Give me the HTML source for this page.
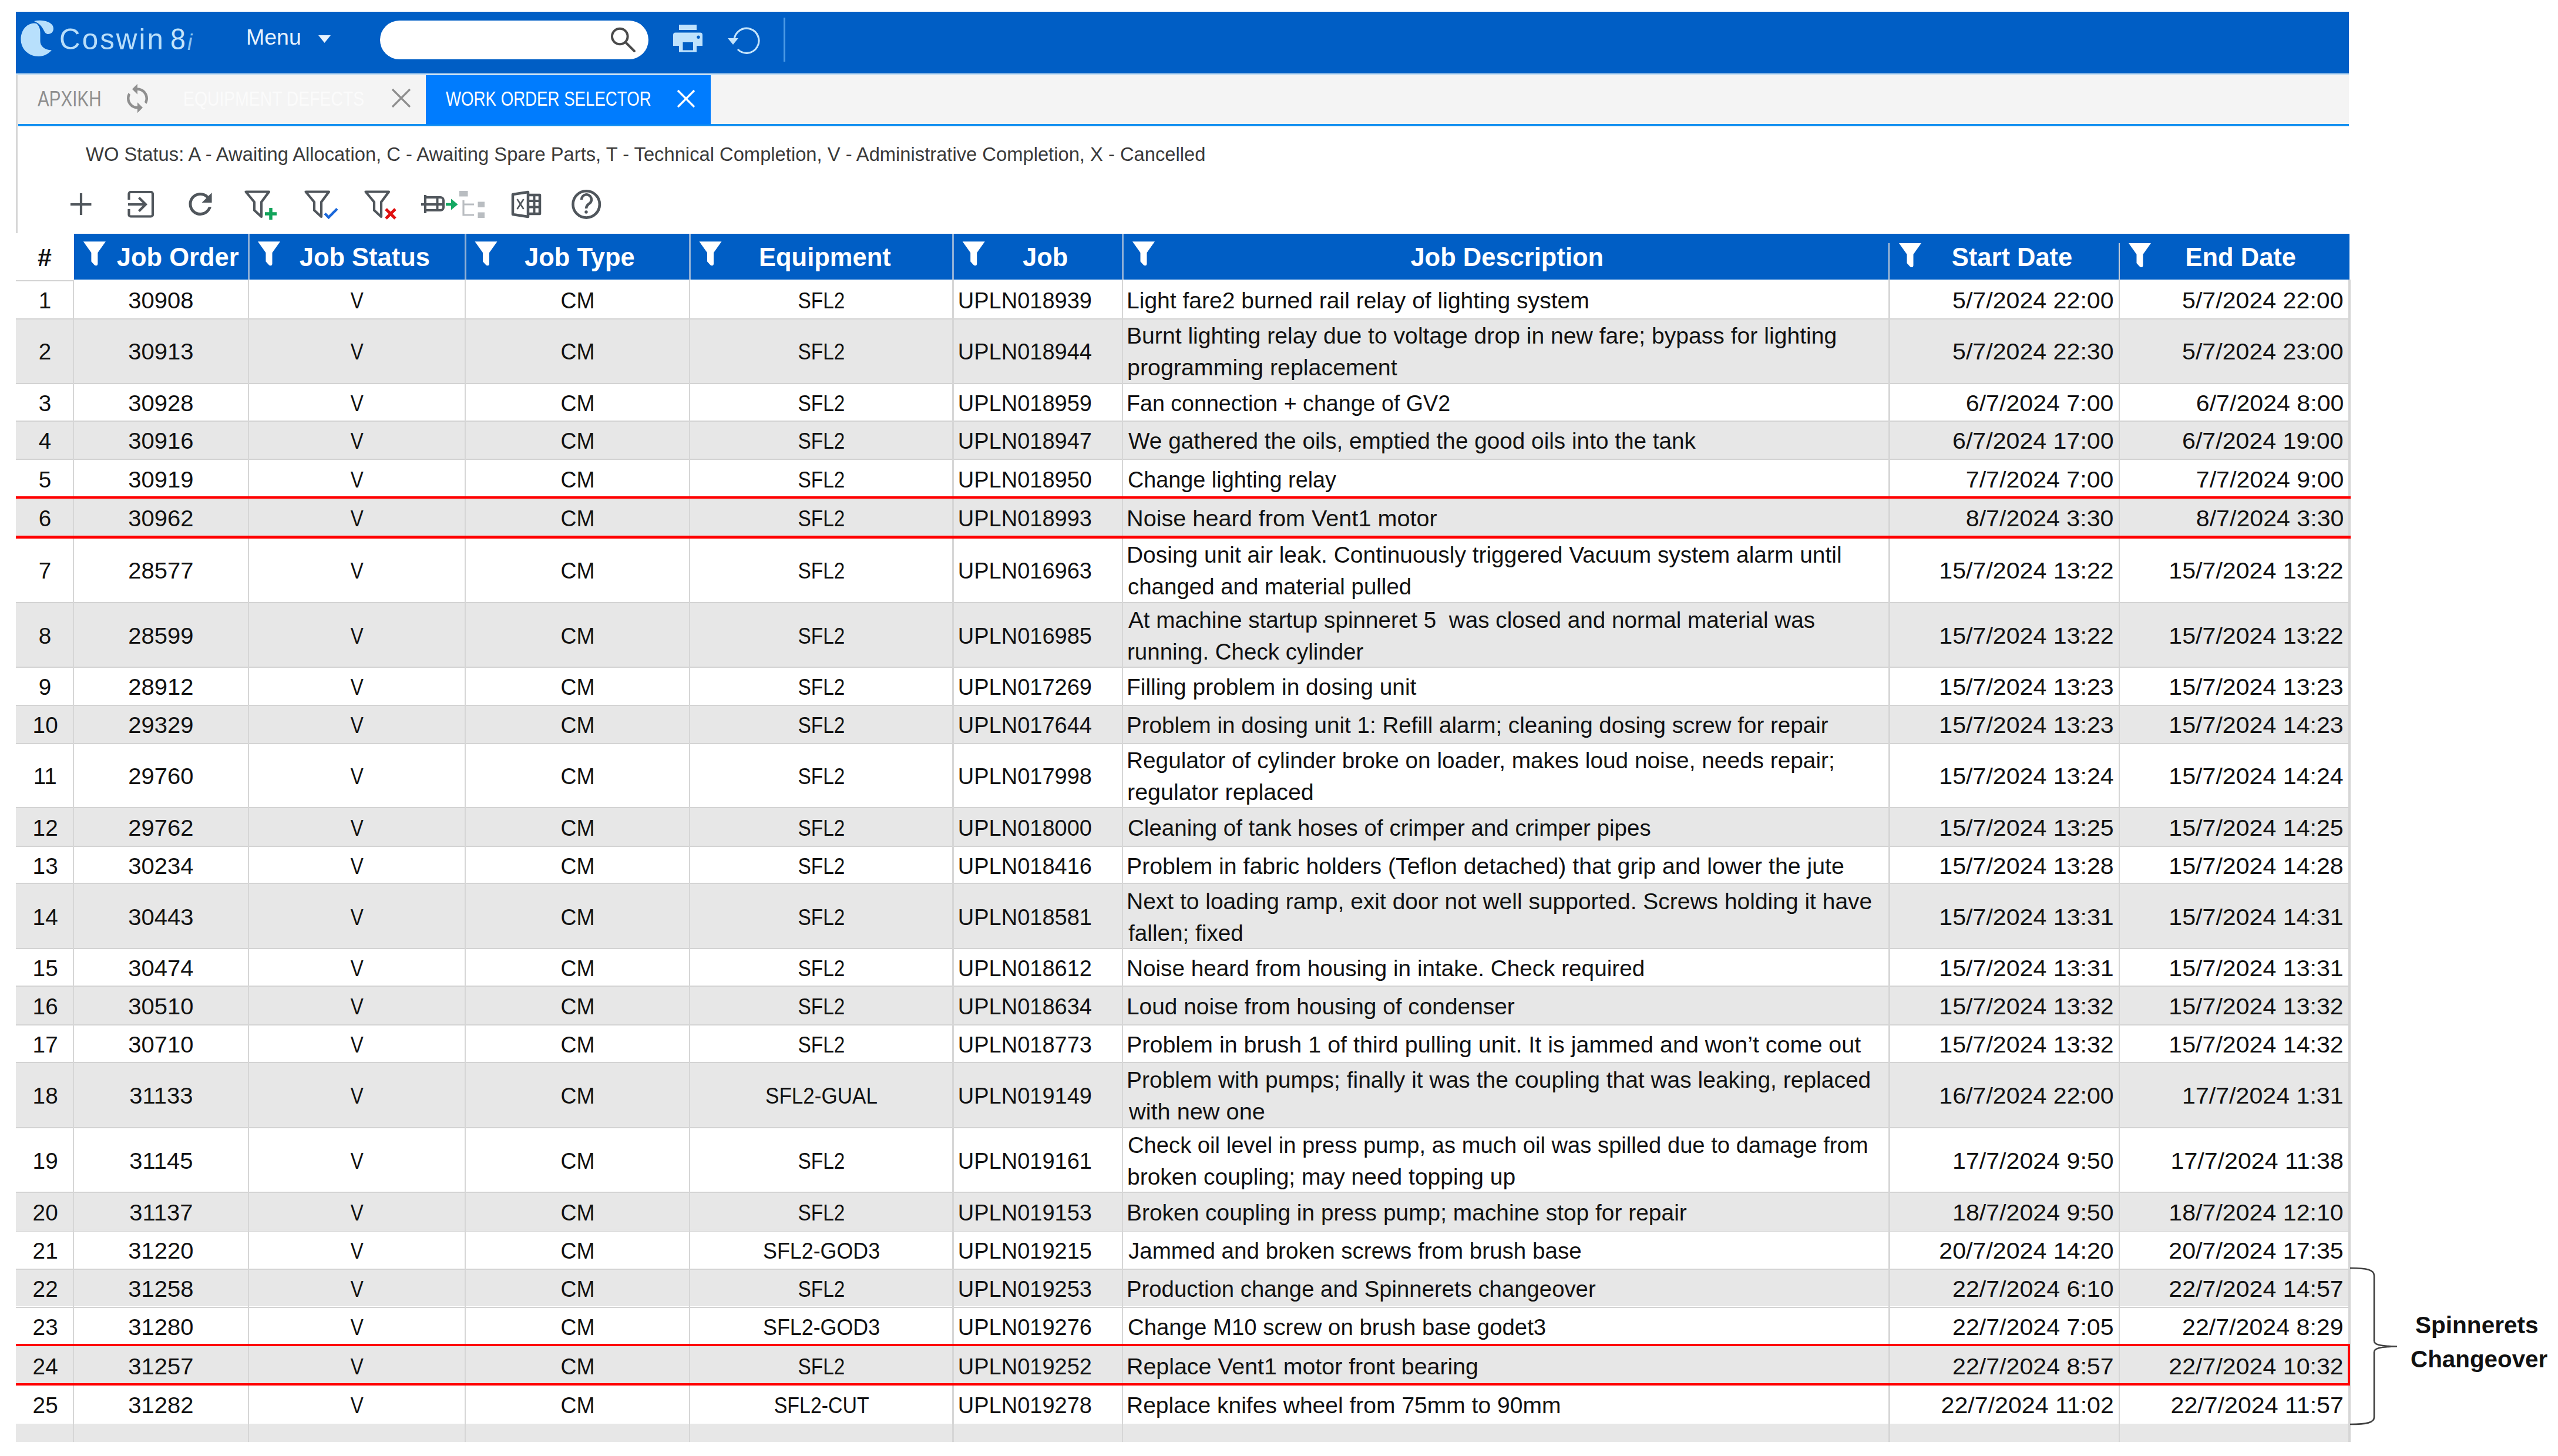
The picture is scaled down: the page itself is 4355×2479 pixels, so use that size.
<!DOCTYPE html>
<html><head><meta charset="utf-8">
<style>
html,body{margin:0;padding:0;}
body{width:4355px;height:2479px;position:relative;overflow:hidden;background:#fff;font-family:"Liberation Sans",sans-serif;}
div{position:absolute;}
.t{white-space:pre;line-height:1;}
.r{left:27px;width:3973px;}
.hl{left:27px;width:3973px;height:2px;background:#d3d3d3;}
.vl{width:2.2px;background:#d6d6d6;}
.hd{top:398px;height:78px;width:3px;background:#8fb0d6;}
svg{position:absolute;left:0;top:0;}
</style></head><body>
<!-- top header bar -->
<div style="left:27px;top:20px;width:3972px;height:104.5px;background:#005ec5;"></div>
<div style="left:27px;top:124.5px;width:3972px;height:3.5px;background:#c9e1f3;"></div>
<!-- tab strip -->
<div style="left:27px;top:128px;width:3972px;height:83px;background:#f4f4f4;"></div>
<div style="left:27px;top:128px;width:3px;height:269px;background:#d6d6d6;"></div>
<div style="left:31px;top:211px;width:3968px;height:4px;background:#1490f0;"></div>
<div style="left:725px;top:128px;width:484.5px;height:84px;background:#007cfe;"></div>
<!-- search -->
<div style="left:647px;top:35px;width:457px;height:66px;border-radius:33px;background:#fff;"></div>
<div style="left:1334px;top:30px;width:3px;height:75px;background:#4d9be6;"></div>

<div class="t" style="left:101px;top:41.5px;font-size:49.4px;color:#b9def9;letter-spacing:3px;">Coswin</div>
<div class="t" style="left:290px;top:41.5px;font-size:49.4px;color:#c4e4fb;transform:scaleX(0.94);transform-origin:left center;">8</div>
<div class="t" style="left:319px;top:53px;font-size:38px;font-style:italic;color:#8cc4f0;">i</div>
<div class="t" style="left:419px;top:44.5px;font-size:37.5px;color:#e8f3fd;">Menu</div>

<div class="t" style="left:64px;top:149.6px;font-size:37px;color:#8e8e8e;transform:scaleX(0.80);transform-origin:left center;">APXIKH</div>
<div class="t" style="left:312px;top:150.1px;font-size:35.3px;color:#fbfbfb;transform:scaleX(0.803);transform-origin:left center;">EQUIPMENT DEFECTS</div>
<div class="t" style="left:759px;top:150.1px;font-size:35.3px;color:#ffffff;transform:scaleX(0.783);transform-origin:left center;">WORK ORDER SELECTOR</div>

<div class="t" style="left:146px;top:247px;font-size:32.72px;color:#3a3a3a;">WO Status: A - Awaiting Allocation, C - Awaiting Spare Parts, T - Technical Completion, V - Administrative Completion, X - Cancelled</div>

<!-- table header -->
<div style="left:126px;top:398px;width:3873.5px;height:78px;background:#005ec5;"></div>
<div class="hd" style="left:421.5px;"></div><div class="hd" style="left:790.5px;"></div><div class="hd" style="left:1172.9px;"></div><div class="hd" style="left:1621.0px;"></div><div class="hd" style="left:1909.5px;"></div><div class="hd" style="left:3215.0px;top:414px;height:62px;background:#c4cdd8;width:2.4px"></div><div class="hd" style="left:3606.5px;top:414px;height:62px;background:#c4cdd8;width:2.4px"></div>

<!-- rows -->
<div class="r" style="top:476.5px;height:65.1px;background:#ffffff"></div>
<div class="r" style="top:541.6px;height:110.0px;background:#e7e7e7"></div>
<div class="r" style="top:651.6px;height:64.4px;background:#ffffff"></div>
<div class="r" style="top:716.0px;height:65.0px;background:#e7e7e7"></div>
<div class="r" style="top:781.0px;height:65.5px;background:#ffffff"></div>
<div class="r" style="top:846.5px;height:68.0px;background:#e7e7e7"></div>
<div class="r" style="top:914.5px;height:110.1px;background:#ffffff"></div>
<div class="r" style="top:1024.6px;height:110.1px;background:#e7e7e7"></div>
<div class="r" style="top:1134.7px;height:65.1px;background:#ffffff"></div>
<div class="r" style="top:1199.8px;height:65.2px;background:#e7e7e7"></div>
<div class="r" style="top:1265.0px;height:108.7px;background:#ffffff"></div>
<div class="r" style="top:1373.7px;height:66.3px;background:#e7e7e7"></div>
<div class="r" style="top:1440.0px;height:63.4px;background:#ffffff"></div>
<div class="r" style="top:1503.4px;height:110.6px;background:#e7e7e7"></div>
<div class="r" style="top:1614.0px;height:64.4px;background:#ffffff"></div>
<div class="r" style="top:1678.4px;height:65.6px;background:#e7e7e7"></div>
<div class="r" style="top:1744.0px;height:63.8px;background:#ffffff"></div>
<div class="r" style="top:1807.8px;height:111.2px;background:#e7e7e7"></div>
<div class="r" style="top:1919.0px;height:109.8px;background:#ffffff"></div>
<div class="r" style="top:2028.8px;height:65.7px;background:#e7e7e7"></div>
<div class="r" style="top:2094.5px;height:65.1px;background:#ffffff"></div>
<div class="r" style="top:2159.6px;height:64.9px;background:#e7e7e7"></div>
<div class="r" style="top:2224.5px;height:65.8px;background:#ffffff"></div>
<div class="r" style="top:2290.3px;height:66.7px;background:#e7e7e7"></div>
<div class="r" style="top:2357.0px;height:66.6px;background:#ffffff"></div>
<div class="t" style="left:77.0px;width:0;display:flex;justify-content:center;top:492.9px;font-size:38px; color:#111;"><span style="white-space:pre;transform:scaleX(1.0186);">1</span></div>
<div class="t" style="left:274.0px;width:0;display:flex;justify-content:center;top:492.9px;font-size:38px; color:#111;"><span style="white-space:pre;transform:scaleX(1.0528);">30908</span></div>
<div class="t" style="left:607.5px;width:0;display:flex;justify-content:center;top:492.9px;font-size:38px; color:#111;"><span style="white-space:pre;transform:scaleX(0.8692);">V</span></div>
<div class="t" style="left:983.2px;width:0;display:flex;justify-content:center;top:492.9px;font-size:38px; color:#111;"><span style="white-space:pre;transform:scaleX(0.9812);">CM</span></div>
<div class="t" style="left:1398.5px;width:0;display:flex;justify-content:center;top:492.9px;font-size:38px; color:#111;"><span style="white-space:pre;transform:scaleX(0.8795);">SFL2</span></div>
<div class="t" style="left:1630.8px;top:492.9px;font-size:38px;color:#111;">UPLN018939</div>
<div class="t" style="left:1917.5px;top:492.9px;font-size:38px;transform:scaleX(1.0274);transform-origin:left center;color:#111;">Light fare2 burned rail relay of lighting system</div>
<div class="t" style="right:756.5px;top:492.9px;font-size:38px;transform:scaleX(1.0826);transform-origin:right center;color:#111;">5/7/2024 22:00</div>
<div class="t" style="right:365.0px;top:492.9px;font-size:38px;transform:scaleX(1.0826);transform-origin:right center;color:#111;">5/7/2024 22:00</div>
<div class="t" style="left:77.0px;width:0;display:flex;justify-content:center;top:580.4px;font-size:38px; color:#111;"><span style="white-space:pre;transform:scaleX(1.0186);">2</span></div>
<div class="t" style="left:274.0px;width:0;display:flex;justify-content:center;top:580.4px;font-size:38px; color:#111;"><span style="white-space:pre;transform:scaleX(1.0528);">30913</span></div>
<div class="t" style="left:607.5px;width:0;display:flex;justify-content:center;top:580.4px;font-size:38px; color:#111;"><span style="white-space:pre;transform:scaleX(0.8692);">V</span></div>
<div class="t" style="left:983.2px;width:0;display:flex;justify-content:center;top:580.4px;font-size:38px; color:#111;"><span style="white-space:pre;transform:scaleX(0.9812);">CM</span></div>
<div class="t" style="left:1398.5px;width:0;display:flex;justify-content:center;top:580.4px;font-size:38px; color:#111;"><span style="white-space:pre;transform:scaleX(0.8795);">SFL2</span></div>
<div class="t" style="left:1630.8px;top:580.4px;font-size:38px;color:#111;">UPLN018944</div>
<div class="t" style="left:1917.5px;top:553.4px;font-size:38px;transform:scaleX(1.0296);transform-origin:left center;color:#111;">Burnt lighting relay due to voltage drop in new fare; bypass for lighting</div>
<div class="t" style="left:1918.5px;top:607.4px;font-size:38px;transform:scaleX(1.0363);transform-origin:left center;color:#111;">programming replacement</div>
<div class="t" style="right:756.5px;top:580.4px;font-size:38px;transform:scaleX(1.0826);transform-origin:right center;color:#111;">5/7/2024 22:30</div>
<div class="t" style="right:365.0px;top:580.4px;font-size:38px;transform:scaleX(1.0826);transform-origin:right center;color:#111;">5/7/2024 23:00</div>
<div class="t" style="left:77.0px;width:0;display:flex;justify-content:center;top:667.6px;font-size:38px; color:#111;"><span style="white-space:pre;transform:scaleX(1.0186);">3</span></div>
<div class="t" style="left:274.0px;width:0;display:flex;justify-content:center;top:667.6px;font-size:38px; color:#111;"><span style="white-space:pre;transform:scaleX(1.0528);">30928</span></div>
<div class="t" style="left:607.5px;width:0;display:flex;justify-content:center;top:667.6px;font-size:38px; color:#111;"><span style="white-space:pre;transform:scaleX(0.8692);">V</span></div>
<div class="t" style="left:983.2px;width:0;display:flex;justify-content:center;top:667.6px;font-size:38px; color:#111;"><span style="white-space:pre;transform:scaleX(0.9812);">CM</span></div>
<div class="t" style="left:1398.5px;width:0;display:flex;justify-content:center;top:667.6px;font-size:38px; color:#111;"><span style="white-space:pre;transform:scaleX(0.8795);">SFL2</span></div>
<div class="t" style="left:1630.8px;top:667.6px;font-size:38px;color:#111;">UPLN018959</div>
<div class="t" style="left:1917.6px;top:667.6px;font-size:38px;transform:scaleX(0.9900);transform-origin:left center;color:#111;">Fan connection + change of GV2</div>
<div class="t" style="right:756.5px;top:667.6px;font-size:38px;transform:scaleX(1.0826);transform-origin:right center;color:#111;">6/7/2024 7:00</div>
<div class="t" style="right:365.0px;top:667.6px;font-size:38px;transform:scaleX(1.0826);transform-origin:right center;color:#111;">6/7/2024 8:00</div>
<div class="t" style="left:77.0px;width:0;display:flex;justify-content:center;top:732.3px;font-size:38px; color:#111;"><span style="white-space:pre;transform:scaleX(1.0186);">4</span></div>
<div class="t" style="left:274.0px;width:0;display:flex;justify-content:center;top:732.3px;font-size:38px; color:#111;"><span style="white-space:pre;transform:scaleX(1.0528);">30916</span></div>
<div class="t" style="left:607.5px;width:0;display:flex;justify-content:center;top:732.3px;font-size:38px; color:#111;"><span style="white-space:pre;transform:scaleX(0.8692);">V</span></div>
<div class="t" style="left:983.2px;width:0;display:flex;justify-content:center;top:732.3px;font-size:38px; color:#111;"><span style="white-space:pre;transform:scaleX(0.9812);">CM</span></div>
<div class="t" style="left:1398.5px;width:0;display:flex;justify-content:center;top:732.3px;font-size:38px; color:#111;"><span style="white-space:pre;transform:scaleX(0.8795);">SFL2</span></div>
<div class="t" style="left:1630.8px;top:732.3px;font-size:38px;color:#111;">UPLN018947</div>
<div class="t" style="left:1920.6px;top:732.3px;font-size:38px;transform:scaleX(1.0192);transform-origin:left center;color:#111;">We gathered the oils, emptied the good oils into the tank</div>
<div class="t" style="right:756.5px;top:732.3px;font-size:38px;transform:scaleX(1.0826);transform-origin:right center;color:#111;">6/7/2024 17:00</div>
<div class="t" style="right:365.0px;top:732.3px;font-size:38px;transform:scaleX(1.0826);transform-origin:right center;color:#111;">6/7/2024 19:00</div>
<div class="t" style="left:77.0px;width:0;display:flex;justify-content:center;top:797.6px;font-size:38px; color:#111;"><span style="white-space:pre;transform:scaleX(1.0186);">5</span></div>
<div class="t" style="left:274.0px;width:0;display:flex;justify-content:center;top:797.6px;font-size:38px; color:#111;"><span style="white-space:pre;transform:scaleX(1.0528);">30919</span></div>
<div class="t" style="left:607.5px;width:0;display:flex;justify-content:center;top:797.6px;font-size:38px; color:#111;"><span style="white-space:pre;transform:scaleX(0.8692);">V</span></div>
<div class="t" style="left:983.2px;width:0;display:flex;justify-content:center;top:797.6px;font-size:38px; color:#111;"><span style="white-space:pre;transform:scaleX(0.9812);">CM</span></div>
<div class="t" style="left:1398.5px;width:0;display:flex;justify-content:center;top:797.6px;font-size:38px; color:#111;"><span style="white-space:pre;transform:scaleX(0.8795);">SFL2</span></div>
<div class="t" style="left:1630.8px;top:797.6px;font-size:38px;color:#111;">UPLN018950</div>
<div class="t" style="left:1919.6px;top:797.6px;font-size:38px;transform:scaleX(0.9944);transform-origin:left center;color:#111;">Change lighting relay</div>
<div class="t" style="right:756.5px;top:797.6px;font-size:38px;transform:scaleX(1.0826);transform-origin:right center;color:#111;">7/7/2024 7:00</div>
<div class="t" style="right:365.0px;top:797.6px;font-size:38px;transform:scaleX(1.0826);transform-origin:right center;color:#111;">7/7/2024 9:00</div>
<div class="t" style="left:77.0px;width:0;display:flex;justify-content:center;top:864.3px;font-size:38px; color:#111;"><span style="white-space:pre;transform:scaleX(1.0186);">6</span></div>
<div class="t" style="left:274.0px;width:0;display:flex;justify-content:center;top:864.3px;font-size:38px; color:#111;"><span style="white-space:pre;transform:scaleX(1.0528);">30962</span></div>
<div class="t" style="left:607.5px;width:0;display:flex;justify-content:center;top:864.3px;font-size:38px; color:#111;"><span style="white-space:pre;transform:scaleX(0.8692);">V</span></div>
<div class="t" style="left:983.2px;width:0;display:flex;justify-content:center;top:864.3px;font-size:38px; color:#111;"><span style="white-space:pre;transform:scaleX(0.9812);">CM</span></div>
<div class="t" style="left:1398.5px;width:0;display:flex;justify-content:center;top:864.3px;font-size:38px; color:#111;"><span style="white-space:pre;transform:scaleX(0.8795);">SFL2</span></div>
<div class="t" style="left:1630.8px;top:864.3px;font-size:38px;color:#111;">UPLN018993</div>
<div class="t" style="left:1917.5px;top:864.3px;font-size:38px;transform:scaleX(1.0431);transform-origin:left center;color:#111;">Noise heard from Vent1 motor</div>
<div class="t" style="right:756.5px;top:864.3px;font-size:38px;transform:scaleX(1.0826);transform-origin:right center;color:#111;">8/7/2024 3:30</div>
<div class="t" style="right:365.0px;top:864.3px;font-size:38px;transform:scaleX(1.0826);transform-origin:right center;color:#111;">8/7/2024 3:30</div>
<div class="t" style="left:77.0px;width:0;display:flex;justify-content:center;top:953.4px;font-size:38px; color:#111;"><span style="white-space:pre;transform:scaleX(1.0186);">7</span></div>
<div class="t" style="left:274.0px;width:0;display:flex;justify-content:center;top:953.4px;font-size:38px; color:#111;"><span style="white-space:pre;transform:scaleX(1.0528);">28577</span></div>
<div class="t" style="left:607.5px;width:0;display:flex;justify-content:center;top:953.4px;font-size:38px; color:#111;"><span style="white-space:pre;transform:scaleX(0.8692);">V</span></div>
<div class="t" style="left:983.2px;width:0;display:flex;justify-content:center;top:953.4px;font-size:38px; color:#111;"><span style="white-space:pre;transform:scaleX(0.9812);">CM</span></div>
<div class="t" style="left:1398.5px;width:0;display:flex;justify-content:center;top:953.4px;font-size:38px; color:#111;"><span style="white-space:pre;transform:scaleX(0.8795);">SFL2</span></div>
<div class="t" style="left:1630.8px;top:953.4px;font-size:38px;color:#111;">UPLN016963</div>
<div class="t" style="left:1917.5px;top:926.4px;font-size:38px;transform:scaleX(1.0246);transform-origin:left center;color:#111;">Dosing unit air leak. Continuously triggered Vacuum system alarm until</div>
<div class="t" style="left:1919.6px;top:980.4px;font-size:38px;transform:scaleX(1.0120);transform-origin:left center;color:#111;">changed and material pulled</div>
<div class="t" style="right:756.5px;top:953.4px;font-size:38px;transform:scaleX(1.0826);transform-origin:right center;color:#111;">15/7/2024 13:22</div>
<div class="t" style="right:365.0px;top:953.4px;font-size:38px;transform:scaleX(1.0826);transform-origin:right center;color:#111;">15/7/2024 13:22</div>
<div class="t" style="left:77.0px;width:0;display:flex;justify-content:center;top:1063.5px;font-size:38px; color:#111;"><span style="white-space:pre;transform:scaleX(1.0186);">8</span></div>
<div class="t" style="left:274.0px;width:0;display:flex;justify-content:center;top:1063.5px;font-size:38px; color:#111;"><span style="white-space:pre;transform:scaleX(1.0528);">28599</span></div>
<div class="t" style="left:607.5px;width:0;display:flex;justify-content:center;top:1063.5px;font-size:38px; color:#111;"><span style="white-space:pre;transform:scaleX(0.8692);">V</span></div>
<div class="t" style="left:983.2px;width:0;display:flex;justify-content:center;top:1063.5px;font-size:38px; color:#111;"><span style="white-space:pre;transform:scaleX(0.9812);">CM</span></div>
<div class="t" style="left:1398.5px;width:0;display:flex;justify-content:center;top:1063.5px;font-size:38px; color:#111;"><span style="white-space:pre;transform:scaleX(0.8795);">SFL2</span></div>
<div class="t" style="left:1630.8px;top:1063.5px;font-size:38px;color:#111;">UPLN016985</div>
<div class="t" style="left:1920.6px;top:1036.5px;font-size:38px;transform:scaleX(1.0174);transform-origin:left center;color:#111;">At machine startup spinneret 5  was closed and normal material was</div>
<div class="t" style="left:1918.6px;top:1090.5px;font-size:38px;transform:scaleX(1.0131);transform-origin:left center;color:#111;">running. Check cylinder</div>
<div class="t" style="right:756.5px;top:1063.5px;font-size:38px;transform:scaleX(1.0826);transform-origin:right center;color:#111;">15/7/2024 13:22</div>
<div class="t" style="right:365.0px;top:1063.5px;font-size:38px;transform:scaleX(1.0826);transform-origin:right center;color:#111;">15/7/2024 13:22</div>
<div class="t" style="left:77.0px;width:0;display:flex;justify-content:center;top:1151.1px;font-size:38px; color:#111;"><span style="white-space:pre;transform:scaleX(1.0186);">9</span></div>
<div class="t" style="left:274.0px;width:0;display:flex;justify-content:center;top:1151.1px;font-size:38px; color:#111;"><span style="white-space:pre;transform:scaleX(1.0528);">28912</span></div>
<div class="t" style="left:607.5px;width:0;display:flex;justify-content:center;top:1151.1px;font-size:38px; color:#111;"><span style="white-space:pre;transform:scaleX(0.8692);">V</span></div>
<div class="t" style="left:983.2px;width:0;display:flex;justify-content:center;top:1151.1px;font-size:38px; color:#111;"><span style="white-space:pre;transform:scaleX(0.9812);">CM</span></div>
<div class="t" style="left:1398.5px;width:0;display:flex;justify-content:center;top:1151.1px;font-size:38px; color:#111;"><span style="white-space:pre;transform:scaleX(0.8795);">SFL2</span></div>
<div class="t" style="left:1630.8px;top:1151.1px;font-size:38px;color:#111;">UPLN017269</div>
<div class="t" style="left:1917.5px;top:1151.1px;font-size:38px;transform:scaleX(1.0246);transform-origin:left center;color:#111;">Filling problem in dosing unit</div>
<div class="t" style="right:756.5px;top:1151.1px;font-size:38px;transform:scaleX(1.0826);transform-origin:right center;color:#111;">15/7/2024 13:23</div>
<div class="t" style="right:365.0px;top:1151.1px;font-size:38px;transform:scaleX(1.0826);transform-origin:right center;color:#111;">15/7/2024 13:23</div>
<div class="t" style="left:77.0px;width:0;display:flex;justify-content:center;top:1216.2px;font-size:38px; color:#111;"><span style="white-space:pre;transform:scaleX(1.0186);">10</span></div>
<div class="t" style="left:274.0px;width:0;display:flex;justify-content:center;top:1216.2px;font-size:38px; color:#111;"><span style="white-space:pre;transform:scaleX(1.0528);">29329</span></div>
<div class="t" style="left:607.5px;width:0;display:flex;justify-content:center;top:1216.2px;font-size:38px; color:#111;"><span style="white-space:pre;transform:scaleX(0.8692);">V</span></div>
<div class="t" style="left:983.2px;width:0;display:flex;justify-content:center;top:1216.2px;font-size:38px; color:#111;"><span style="white-space:pre;transform:scaleX(0.9812);">CM</span></div>
<div class="t" style="left:1398.5px;width:0;display:flex;justify-content:center;top:1216.2px;font-size:38px; color:#111;"><span style="white-space:pre;transform:scaleX(0.8795);">SFL2</span></div>
<div class="t" style="left:1630.8px;top:1216.2px;font-size:38px;color:#111;">UPLN017644</div>
<div class="t" style="left:1917.6px;top:1216.2px;font-size:38px;transform:scaleX(1.0155);transform-origin:left center;color:#111;">Problem in dosing unit 1: Refill alarm; cleaning dosing screw for repair</div>
<div class="t" style="right:756.5px;top:1216.2px;font-size:38px;transform:scaleX(1.0826);transform-origin:right center;color:#111;">15/7/2024 13:23</div>
<div class="t" style="right:365.0px;top:1216.2px;font-size:38px;transform:scaleX(1.0826);transform-origin:right center;color:#111;">15/7/2024 14:23</div>
<div class="t" style="left:77.0px;width:0;display:flex;justify-content:center;top:1303.2px;font-size:38px; color:#111;"><span style="white-space:pre;transform:scaleX(1.0186);">11</span></div>
<div class="t" style="left:274.0px;width:0;display:flex;justify-content:center;top:1303.2px;font-size:38px; color:#111;"><span style="white-space:pre;transform:scaleX(1.0528);">29760</span></div>
<div class="t" style="left:607.5px;width:0;display:flex;justify-content:center;top:1303.2px;font-size:38px; color:#111;"><span style="white-space:pre;transform:scaleX(0.8692);">V</span></div>
<div class="t" style="left:983.2px;width:0;display:flex;justify-content:center;top:1303.2px;font-size:38px; color:#111;"><span style="white-space:pre;transform:scaleX(0.9812);">CM</span></div>
<div class="t" style="left:1398.5px;width:0;display:flex;justify-content:center;top:1303.2px;font-size:38px; color:#111;"><span style="white-space:pre;transform:scaleX(0.8795);">SFL2</span></div>
<div class="t" style="left:1630.8px;top:1303.2px;font-size:38px;color:#111;">UPLN017998</div>
<div class="t" style="left:1917.5px;top:1276.2px;font-size:38px;transform:scaleX(1.0211);transform-origin:left center;color:#111;">Regulator of cylinder broke on loader, makes loud noise, needs repair;</div>
<div class="t" style="left:1918.5px;top:1330.2px;font-size:38px;transform:scaleX(1.0375);transform-origin:left center;color:#111;">regulator replaced</div>
<div class="t" style="right:756.5px;top:1303.2px;font-size:38px;transform:scaleX(1.0826);transform-origin:right center;color:#111;">15/7/2024 13:24</div>
<div class="t" style="right:365.0px;top:1303.2px;font-size:38px;transform:scaleX(1.0826);transform-origin:right center;color:#111;">15/7/2024 14:24</div>
<div class="t" style="left:77.0px;width:0;display:flex;justify-content:center;top:1390.7px;font-size:38px; color:#111;"><span style="white-space:pre;transform:scaleX(1.0186);">12</span></div>
<div class="t" style="left:274.0px;width:0;display:flex;justify-content:center;top:1390.7px;font-size:38px; color:#111;"><span style="white-space:pre;transform:scaleX(1.0528);">29762</span></div>
<div class="t" style="left:607.5px;width:0;display:flex;justify-content:center;top:1390.7px;font-size:38px; color:#111;"><span style="white-space:pre;transform:scaleX(0.8692);">V</span></div>
<div class="t" style="left:983.2px;width:0;display:flex;justify-content:center;top:1390.7px;font-size:38px; color:#111;"><span style="white-space:pre;transform:scaleX(0.9812);">CM</span></div>
<div class="t" style="left:1398.5px;width:0;display:flex;justify-content:center;top:1390.7px;font-size:38px; color:#111;"><span style="white-space:pre;transform:scaleX(0.8795);">SFL2</span></div>
<div class="t" style="left:1630.8px;top:1390.7px;font-size:38px;color:#111;">UPLN018000</div>
<div class="t" style="left:1919.6px;top:1390.7px;font-size:38px;transform:scaleX(1.0137);transform-origin:left center;color:#111;">Cleaning of tank hoses of crimper and crimper pipes</div>
<div class="t" style="right:756.5px;top:1390.7px;font-size:38px;transform:scaleX(1.0826);transform-origin:right center;color:#111;">15/7/2024 13:25</div>
<div class="t" style="right:365.0px;top:1390.7px;font-size:38px;transform:scaleX(1.0826);transform-origin:right center;color:#111;">15/7/2024 14:25</div>
<div class="t" style="left:77.0px;width:0;display:flex;justify-content:center;top:1455.5px;font-size:38px; color:#111;"><span style="white-space:pre;transform:scaleX(1.0186);">13</span></div>
<div class="t" style="left:274.0px;width:0;display:flex;justify-content:center;top:1455.5px;font-size:38px; color:#111;"><span style="white-space:pre;transform:scaleX(1.0528);">30234</span></div>
<div class="t" style="left:607.5px;width:0;display:flex;justify-content:center;top:1455.5px;font-size:38px; color:#111;"><span style="white-space:pre;transform:scaleX(0.8692);">V</span></div>
<div class="t" style="left:983.2px;width:0;display:flex;justify-content:center;top:1455.5px;font-size:38px; color:#111;"><span style="white-space:pre;transform:scaleX(0.9812);">CM</span></div>
<div class="t" style="left:1398.5px;width:0;display:flex;justify-content:center;top:1455.5px;font-size:38px; color:#111;"><span style="white-space:pre;transform:scaleX(0.8795);">SFL2</span></div>
<div class="t" style="left:1630.8px;top:1455.5px;font-size:38px;color:#111;">UPLN018416</div>
<div class="t" style="left:1917.5px;top:1455.5px;font-size:38px;transform:scaleX(1.0329);transform-origin:left center;color:#111;">Problem in fabric holders (Teflon detached) that grip and lower the jute</div>
<div class="t" style="right:756.5px;top:1455.5px;font-size:38px;transform:scaleX(1.0826);transform-origin:right center;color:#111;">15/7/2024 13:28</div>
<div class="t" style="right:365.0px;top:1455.5px;font-size:38px;transform:scaleX(1.0826);transform-origin:right center;color:#111;">15/7/2024 14:28</div>
<div class="t" style="left:77.0px;width:0;display:flex;justify-content:center;top:1542.5px;font-size:38px; color:#111;"><span style="white-space:pre;transform:scaleX(1.0186);">14</span></div>
<div class="t" style="left:274.0px;width:0;display:flex;justify-content:center;top:1542.5px;font-size:38px; color:#111;"><span style="white-space:pre;transform:scaleX(1.0528);">30443</span></div>
<div class="t" style="left:607.5px;width:0;display:flex;justify-content:center;top:1542.5px;font-size:38px; color:#111;"><span style="white-space:pre;transform:scaleX(0.8692);">V</span></div>
<div class="t" style="left:983.2px;width:0;display:flex;justify-content:center;top:1542.5px;font-size:38px; color:#111;"><span style="white-space:pre;transform:scaleX(0.9812);">CM</span></div>
<div class="t" style="left:1398.5px;width:0;display:flex;justify-content:center;top:1542.5px;font-size:38px; color:#111;"><span style="white-space:pre;transform:scaleX(0.8795);">SFL2</span></div>
<div class="t" style="left:1630.8px;top:1542.5px;font-size:38px;color:#111;">UPLN018581</div>
<div class="t" style="left:1917.5px;top:1515.5px;font-size:38px;transform:scaleX(1.0254);transform-origin:left center;color:#111;">Next to loading ramp, exit door not well supported. Screws holding it have</div>
<div class="t" style="left:1920.6px;top:1569.5px;font-size:38px;transform:scaleX(1.0190);transform-origin:left center;color:#111;">fallen; fixed</div>
<div class="t" style="right:756.5px;top:1542.5px;font-size:38px;transform:scaleX(1.0826);transform-origin:right center;color:#111;">15/7/2024 13:31</div>
<div class="t" style="right:365.0px;top:1542.5px;font-size:38px;transform:scaleX(1.0826);transform-origin:right center;color:#111;">15/7/2024 14:31</div>
<div class="t" style="left:77.0px;width:0;display:flex;justify-content:center;top:1630.0px;font-size:38px; color:#111;"><span style="white-space:pre;transform:scaleX(1.0186);">15</span></div>
<div class="t" style="left:274.0px;width:0;display:flex;justify-content:center;top:1630.0px;font-size:38px; color:#111;"><span style="white-space:pre;transform:scaleX(1.0528);">30474</span></div>
<div class="t" style="left:607.5px;width:0;display:flex;justify-content:center;top:1630.0px;font-size:38px; color:#111;"><span style="white-space:pre;transform:scaleX(0.8692);">V</span></div>
<div class="t" style="left:983.2px;width:0;display:flex;justify-content:center;top:1630.0px;font-size:38px; color:#111;"><span style="white-space:pre;transform:scaleX(0.9812);">CM</span></div>
<div class="t" style="left:1398.5px;width:0;display:flex;justify-content:center;top:1630.0px;font-size:38px; color:#111;"><span style="white-space:pre;transform:scaleX(0.8795);">SFL2</span></div>
<div class="t" style="left:1630.8px;top:1630.0px;font-size:38px;color:#111;">UPLN018612</div>
<div class="t" style="left:1917.5px;top:1630.0px;font-size:38px;transform:scaleX(1.0187);transform-origin:left center;color:#111;">Noise heard from housing in intake. Check required</div>
<div class="t" style="right:756.5px;top:1630.0px;font-size:38px;transform:scaleX(1.0826);transform-origin:right center;color:#111;">15/7/2024 13:31</div>
<div class="t" style="right:365.0px;top:1630.0px;font-size:38px;transform:scaleX(1.0826);transform-origin:right center;color:#111;">15/7/2024 13:31</div>
<div class="t" style="left:77.0px;width:0;display:flex;justify-content:center;top:1695.0px;font-size:38px; color:#111;"><span style="white-space:pre;transform:scaleX(1.0186);">16</span></div>
<div class="t" style="left:274.0px;width:0;display:flex;justify-content:center;top:1695.0px;font-size:38px; color:#111;"><span style="white-space:pre;transform:scaleX(1.0528);">30510</span></div>
<div class="t" style="left:607.5px;width:0;display:flex;justify-content:center;top:1695.0px;font-size:38px; color:#111;"><span style="white-space:pre;transform:scaleX(0.8692);">V</span></div>
<div class="t" style="left:983.2px;width:0;display:flex;justify-content:center;top:1695.0px;font-size:38px; color:#111;"><span style="white-space:pre;transform:scaleX(0.9812);">CM</span></div>
<div class="t" style="left:1398.5px;width:0;display:flex;justify-content:center;top:1695.0px;font-size:38px; color:#111;"><span style="white-space:pre;transform:scaleX(0.8795);">SFL2</span></div>
<div class="t" style="left:1630.8px;top:1695.0px;font-size:38px;color:#111;">UPLN018634</div>
<div class="t" style="left:1917.5px;top:1695.0px;font-size:38px;transform:scaleX(1.0221);transform-origin:left center;color:#111;">Loud noise from housing of condenser</div>
<div class="t" style="right:756.5px;top:1695.0px;font-size:38px;transform:scaleX(1.0826);transform-origin:right center;color:#111;">15/7/2024 13:32</div>
<div class="t" style="right:365.0px;top:1695.0px;font-size:38px;transform:scaleX(1.0826);transform-origin:right center;color:#111;">15/7/2024 13:32</div>
<div class="t" style="left:77.0px;width:0;display:flex;justify-content:center;top:1759.7px;font-size:38px; color:#111;"><span style="white-space:pre;transform:scaleX(1.0186);">17</span></div>
<div class="t" style="left:274.0px;width:0;display:flex;justify-content:center;top:1759.7px;font-size:38px; color:#111;"><span style="white-space:pre;transform:scaleX(1.0528);">30710</span></div>
<div class="t" style="left:607.5px;width:0;display:flex;justify-content:center;top:1759.7px;font-size:38px; color:#111;"><span style="white-space:pre;transform:scaleX(0.8692);">V</span></div>
<div class="t" style="left:983.2px;width:0;display:flex;justify-content:center;top:1759.7px;font-size:38px; color:#111;"><span style="white-space:pre;transform:scaleX(0.9812);">CM</span></div>
<div class="t" style="left:1398.5px;width:0;display:flex;justify-content:center;top:1759.7px;font-size:38px; color:#111;"><span style="white-space:pre;transform:scaleX(0.8795);">SFL2</span></div>
<div class="t" style="left:1630.8px;top:1759.7px;font-size:38px;color:#111;">UPLN018773</div>
<div class="t" style="left:1917.5px;top:1759.7px;font-size:38px;transform:scaleX(1.0384);transform-origin:left center;color:#111;">Problem in brush 1 of third pulling unit. It is jammed and won’t come out</div>
<div class="t" style="right:756.5px;top:1759.7px;font-size:38px;transform:scaleX(1.0826);transform-origin:right center;color:#111;">15/7/2024 13:32</div>
<div class="t" style="right:365.0px;top:1759.7px;font-size:38px;transform:scaleX(1.0826);transform-origin:right center;color:#111;">15/7/2024 14:32</div>
<div class="t" style="left:77.0px;width:0;display:flex;justify-content:center;top:1847.2px;font-size:38px; color:#111;"><span style="white-space:pre;transform:scaleX(1.0186);">18</span></div>
<div class="t" style="left:274.0px;width:0;display:flex;justify-content:center;top:1847.2px;font-size:38px; color:#111;"><span style="white-space:pre;transform:scaleX(1.0528);">31133</span></div>
<div class="t" style="left:607.5px;width:0;display:flex;justify-content:center;top:1847.2px;font-size:38px; color:#111;"><span style="white-space:pre;transform:scaleX(0.8692);">V</span></div>
<div class="t" style="left:983.2px;width:0;display:flex;justify-content:center;top:1847.2px;font-size:38px; color:#111;"><span style="white-space:pre;transform:scaleX(0.9812);">CM</span></div>
<div class="t" style="left:1398.5px;width:0;display:flex;justify-content:center;top:1847.2px;font-size:38px; color:#111;"><span style="white-space:pre;transform:scaleX(0.9227);">SFL2-GUAL</span></div>
<div class="t" style="left:1630.8px;top:1847.2px;font-size:38px;color:#111;">UPLN019149</div>
<div class="t" style="left:1917.5px;top:1820.2px;font-size:38px;transform:scaleX(1.0256);transform-origin:left center;color:#111;">Problem with pumps; finally it was the coupling that was leaking, replaced</div>
<div class="t" style="left:1921.6px;top:1874.2px;font-size:38px;transform:scaleX(1.0453);transform-origin:left center;color:#111;">with new one</div>
<div class="t" style="right:756.5px;top:1847.2px;font-size:38px;transform:scaleX(1.0826);transform-origin:right center;color:#111;">16/7/2024 22:00</div>
<div class="t" style="right:365.0px;top:1847.2px;font-size:38px;transform:scaleX(1.0826);transform-origin:right center;color:#111;">17/7/2024 1:31</div>
<div class="t" style="left:77.0px;width:0;display:flex;justify-content:center;top:1957.7px;font-size:38px; color:#111;"><span style="white-space:pre;transform:scaleX(1.0186);">19</span></div>
<div class="t" style="left:274.0px;width:0;display:flex;justify-content:center;top:1957.7px;font-size:38px; color:#111;"><span style="white-space:pre;transform:scaleX(1.0528);">31145</span></div>
<div class="t" style="left:607.5px;width:0;display:flex;justify-content:center;top:1957.7px;font-size:38px; color:#111;"><span style="white-space:pre;transform:scaleX(0.8692);">V</span></div>
<div class="t" style="left:983.2px;width:0;display:flex;justify-content:center;top:1957.7px;font-size:38px; color:#111;"><span style="white-space:pre;transform:scaleX(0.9812);">CM</span></div>
<div class="t" style="left:1398.5px;width:0;display:flex;justify-content:center;top:1957.7px;font-size:38px; color:#111;"><span style="white-space:pre;transform:scaleX(0.8795);">SFL2</span></div>
<div class="t" style="left:1630.8px;top:1957.7px;font-size:38px;color:#111;">UPLN019161</div>
<div class="t" style="left:1919.6px;top:1930.7px;font-size:38px;transform:scaleX(1.0048);transform-origin:left center;color:#111;">Check oil level in press pump, as much oil was spilled due to damage from</div>
<div class="t" style="left:1918.5px;top:1984.7px;font-size:38px;transform:scaleX(1.0262);transform-origin:left center;color:#111;">broken coupling; may need topping up</div>
<div class="t" style="right:756.5px;top:1957.7px;font-size:38px;transform:scaleX(1.0826);transform-origin:right center;color:#111;">17/7/2024 9:50</div>
<div class="t" style="right:365.0px;top:1957.7px;font-size:38px;transform:scaleX(1.0826);transform-origin:right center;color:#111;">17/7/2024 11:38</div>
<div class="t" style="left:77.0px;width:0;display:flex;justify-content:center;top:2045.5px;font-size:38px; color:#111;"><span style="white-space:pre;transform:scaleX(1.0186);">20</span></div>
<div class="t" style="left:274.0px;width:0;display:flex;justify-content:center;top:2045.5px;font-size:38px; color:#111;"><span style="white-space:pre;transform:scaleX(1.0528);">31137</span></div>
<div class="t" style="left:607.5px;width:0;display:flex;justify-content:center;top:2045.5px;font-size:38px; color:#111;"><span style="white-space:pre;transform:scaleX(0.8692);">V</span></div>
<div class="t" style="left:983.2px;width:0;display:flex;justify-content:center;top:2045.5px;font-size:38px; color:#111;"><span style="white-space:pre;transform:scaleX(0.9812);">CM</span></div>
<div class="t" style="left:1398.5px;width:0;display:flex;justify-content:center;top:2045.5px;font-size:38px; color:#111;"><span style="white-space:pre;transform:scaleX(0.8795);">SFL2</span></div>
<div class="t" style="left:1630.8px;top:2045.5px;font-size:38px;color:#111;">UPLN019153</div>
<div class="t" style="left:1917.5px;top:2045.5px;font-size:38px;transform:scaleX(1.0239);transform-origin:left center;color:#111;">Broken coupling in press pump; machine stop for repair</div>
<div class="t" style="right:756.5px;top:2045.5px;font-size:38px;transform:scaleX(1.0826);transform-origin:right center;color:#111;">18/7/2024 9:50</div>
<div class="t" style="right:365.0px;top:2045.5px;font-size:38px;transform:scaleX(1.0826);transform-origin:right center;color:#111;">18/7/2024 12:10</div>
<div class="t" style="left:77.0px;width:0;display:flex;justify-content:center;top:2110.9px;font-size:38px; color:#111;"><span style="white-space:pre;transform:scaleX(1.0186);">21</span></div>
<div class="t" style="left:274.0px;width:0;display:flex;justify-content:center;top:2110.9px;font-size:38px; color:#111;"><span style="white-space:pre;transform:scaleX(1.0528);">31220</span></div>
<div class="t" style="left:607.5px;width:0;display:flex;justify-content:center;top:2110.9px;font-size:38px; color:#111;"><span style="white-space:pre;transform:scaleX(0.8692);">V</span></div>
<div class="t" style="left:983.2px;width:0;display:flex;justify-content:center;top:2110.9px;font-size:38px; color:#111;"><span style="white-space:pre;transform:scaleX(0.9812);">CM</span></div>
<div class="t" style="left:1398.5px;width:0;display:flex;justify-content:center;top:2110.9px;font-size:38px; color:#111;"><span style="white-space:pre;transform:scaleX(0.9424);">SFL2-GOD3</span></div>
<div class="t" style="left:1630.8px;top:2110.9px;font-size:38px;color:#111;">UPLN019215</div>
<div class="t" style="left:1920.6px;top:2110.9px;font-size:38px;transform:scaleX(1.0149);transform-origin:left center;color:#111;">Jammed and broken screws from brush base</div>
<div class="t" style="right:756.5px;top:2110.9px;font-size:38px;transform:scaleX(1.0826);transform-origin:right center;color:#111;">20/7/2024 14:20</div>
<div class="t" style="right:365.0px;top:2110.9px;font-size:38px;transform:scaleX(1.0826);transform-origin:right center;color:#111;">20/7/2024 17:35</div>
<div class="t" style="left:77.0px;width:0;display:flex;justify-content:center;top:2175.9px;font-size:38px; color:#111;"><span style="white-space:pre;transform:scaleX(1.0186);">22</span></div>
<div class="t" style="left:274.0px;width:0;display:flex;justify-content:center;top:2175.9px;font-size:38px; color:#111;"><span style="white-space:pre;transform:scaleX(1.0528);">31258</span></div>
<div class="t" style="left:607.5px;width:0;display:flex;justify-content:center;top:2175.9px;font-size:38px; color:#111;"><span style="white-space:pre;transform:scaleX(0.8692);">V</span></div>
<div class="t" style="left:983.2px;width:0;display:flex;justify-content:center;top:2175.9px;font-size:38px; color:#111;"><span style="white-space:pre;transform:scaleX(0.9812);">CM</span></div>
<div class="t" style="left:1398.5px;width:0;display:flex;justify-content:center;top:2175.9px;font-size:38px; color:#111;"><span style="white-space:pre;transform:scaleX(0.8795);">SFL2</span></div>
<div class="t" style="left:1630.8px;top:2175.9px;font-size:38px;color:#111;">UPLN019253</div>
<div class="t" style="left:1917.6px;top:2175.9px;font-size:38px;transform:scaleX(1.0081);transform-origin:left center;color:#111;">Production change and Spinnerets changeover</div>
<div class="t" style="right:756.5px;top:2175.9px;font-size:38px;transform:scaleX(1.0826);transform-origin:right center;color:#111;">22/7/2024 6:10</div>
<div class="t" style="right:365.0px;top:2175.9px;font-size:38px;transform:scaleX(1.0826);transform-origin:right center;color:#111;">22/7/2024 14:57</div>
<div class="t" style="left:77.0px;width:0;display:flex;justify-content:center;top:2241.2px;font-size:38px; color:#111;"><span style="white-space:pre;transform:scaleX(1.0186);">23</span></div>
<div class="t" style="left:274.0px;width:0;display:flex;justify-content:center;top:2241.2px;font-size:38px; color:#111;"><span style="white-space:pre;transform:scaleX(1.0528);">31280</span></div>
<div class="t" style="left:607.5px;width:0;display:flex;justify-content:center;top:2241.2px;font-size:38px; color:#111;"><span style="white-space:pre;transform:scaleX(0.8692);">V</span></div>
<div class="t" style="left:983.2px;width:0;display:flex;justify-content:center;top:2241.2px;font-size:38px; color:#111;"><span style="white-space:pre;transform:scaleX(0.9812);">CM</span></div>
<div class="t" style="left:1398.5px;width:0;display:flex;justify-content:center;top:2241.2px;font-size:38px; color:#111;"><span style="white-space:pre;transform:scaleX(0.9424);">SFL2-GOD3</span></div>
<div class="t" style="left:1630.8px;top:2241.2px;font-size:38px;color:#111;">UPLN019276</div>
<div class="t" style="left:1919.6px;top:2241.2px;font-size:38px;transform:scaleX(1.0093);transform-origin:left center;color:#111;">Change M10 screw on brush base godet3</div>
<div class="t" style="right:756.5px;top:2241.2px;font-size:38px;transform:scaleX(1.0826);transform-origin:right center;color:#111;">22/7/2024 7:05</div>
<div class="t" style="right:365.0px;top:2241.2px;font-size:38px;transform:scaleX(1.0826);transform-origin:right center;color:#111;">22/7/2024 8:29</div>
<div class="t" style="left:77.0px;width:0;display:flex;justify-content:center;top:2307.5px;font-size:38px; color:#111;"><span style="white-space:pre;transform:scaleX(1.0186);">24</span></div>
<div class="t" style="left:274.0px;width:0;display:flex;justify-content:center;top:2307.5px;font-size:38px; color:#111;"><span style="white-space:pre;transform:scaleX(1.0528);">31257</span></div>
<div class="t" style="left:607.5px;width:0;display:flex;justify-content:center;top:2307.5px;font-size:38px; color:#111;"><span style="white-space:pre;transform:scaleX(0.8692);">V</span></div>
<div class="t" style="left:983.2px;width:0;display:flex;justify-content:center;top:2307.5px;font-size:38px; color:#111;"><span style="white-space:pre;transform:scaleX(0.9812);">CM</span></div>
<div class="t" style="left:1398.5px;width:0;display:flex;justify-content:center;top:2307.5px;font-size:38px; color:#111;"><span style="white-space:pre;transform:scaleX(0.8795);">SFL2</span></div>
<div class="t" style="left:1630.8px;top:2307.5px;font-size:38px;color:#111;">UPLN019252</div>
<div class="t" style="left:1917.5px;top:2307.5px;font-size:38px;transform:scaleX(1.0349);transform-origin:left center;color:#111;">Replace Vent1 motor front bearing</div>
<div class="t" style="right:756.5px;top:2307.5px;font-size:38px;transform:scaleX(1.0826);transform-origin:right center;color:#111;">22/7/2024 8:57</div>
<div class="t" style="right:365.0px;top:2307.5px;font-size:38px;transform:scaleX(1.0826);transform-origin:right center;color:#111;">22/7/2024 10:32</div>
<div class="t" style="left:77.0px;width:0;display:flex;justify-content:center;top:2374.1px;font-size:38px; color:#111;"><span style="white-space:pre;transform:scaleX(1.0186);">25</span></div>
<div class="t" style="left:274.0px;width:0;display:flex;justify-content:center;top:2374.1px;font-size:38px; color:#111;"><span style="white-space:pre;transform:scaleX(1.0528);">31282</span></div>
<div class="t" style="left:607.5px;width:0;display:flex;justify-content:center;top:2374.1px;font-size:38px; color:#111;"><span style="white-space:pre;transform:scaleX(0.8692);">V</span></div>
<div class="t" style="left:983.2px;width:0;display:flex;justify-content:center;top:2374.1px;font-size:38px; color:#111;"><span style="white-space:pre;transform:scaleX(0.9812);">CM</span></div>
<div class="t" style="left:1398.5px;width:0;display:flex;justify-content:center;top:2374.1px;font-size:38px; color:#111;"><span style="white-space:pre;transform:scaleX(0.8926);">SFL2-CUT</span></div>
<div class="t" style="left:1630.8px;top:2374.1px;font-size:38px;color:#111;">UPLN019278</div>
<div class="t" style="left:1917.5px;top:2374.1px;font-size:38px;transform:scaleX(1.0267);transform-origin:left center;color:#111;">Replace knifes wheel from 75mm to 90mm</div>
<div class="t" style="right:756.5px;top:2374.1px;font-size:38px;transform:scaleX(1.0826);transform-origin:right center;color:#111;">22/7/2024 11:02</div>
<div class="t" style="right:365.0px;top:2374.1px;font-size:38px;transform:scaleX(1.0826);transform-origin:right center;color:#111;">22/7/2024 11:57</div>
<div style="left:27px;top:2423.6px;width:3973px;height:31.4px;background:#e7e7e7;"></div>
<div class="hl" style="top:476.5px;width:98px"></div>
<div class="hl" style="top:541.6px"></div>
<div class="hl" style="top:651.6px"></div>
<div class="hl" style="top:716.0px"></div>
<div class="hl" style="top:781.0px"></div>
<div class="hl" style="top:846.5px"></div>
<div class="hl" style="top:914.5px"></div>
<div class="hl" style="top:1024.6px"></div>
<div class="hl" style="top:1134.7px"></div>
<div class="hl" style="top:1199.8px"></div>
<div class="hl" style="top:1265.0px"></div>
<div class="hl" style="top:1373.7px"></div>
<div class="hl" style="top:1440.0px"></div>
<div class="hl" style="top:1503.4px"></div>
<div class="hl" style="top:1614.0px"></div>
<div class="hl" style="top:1678.4px"></div>
<div class="hl" style="top:1744.0px"></div>
<div class="hl" style="top:1807.8px"></div>
<div class="hl" style="top:1919.0px"></div>
<div class="hl" style="top:2028.8px"></div>
<div class="hl" style="top:2094.5px"></div>
<div class="hl" style="top:2159.6px"></div>
<div class="hl" style="top:2224.5px"></div>
<div class="hl" style="top:2290.3px"></div>
<div class="hl" style="top:2357.0px"></div>
<div class="vl" style="left:123.9px;top:476px;height:1979px;"></div>
<div class="vl" style="left:421.9px;top:476px;height:1979px;"></div>
<div class="vl" style="left:790.9px;top:476px;height:1979px;"></div>
<div class="vl" style="left:1173.3px;top:476px;height:1979px;"></div>
<div class="vl" style="left:1621.4px;top:476px;height:1979px;"></div>
<div class="vl" style="left:1909.9px;top:476px;height:1979px;"></div>
<div class="vl" style="left:3215.4px;top:476px;height:1979px;"></div>
<div class="vl" style="left:3606.9px;top:476px;height:1979px;"></div>
<div class="vl" style="left:3998.4px;top:476px;height:1979px;width:3.3px"></div>
<div class="t" style="left:198.8px;top:416.7px;font-size:43.5px;font-weight:bold;color:#fff;">Job Order</div>
<div class="t" style="left:509.7px;top:416.7px;font-size:43.5px;font-weight:bold;color:#fff;">Job Status</div>
<div class="t" style="left:893.0px;top:416.7px;font-size:43.5px;font-weight:bold;color:#fff;">Job Type</div>
<div class="t" style="left:1292.0px;top:416.7px;font-size:43.5px;font-weight:bold;color:#fff;">Equipment</div>
<div class="t" style="left:1741.0px;top:416.7px;font-size:43.5px;font-weight:bold;color:#fff;">Job</div>
<div class="t" style="left:2401.4px;top:416.7px;font-size:43.5px;font-weight:bold;color:#fff;">Job Description</div>
<div class="t" style="left:3322.8px;top:416.7px;font-size:43.5px;font-weight:bold;color:#fff;">Start Date</div>
<div class="t" style="left:3720.5px;top:416.7px;font-size:43.5px;font-weight:bold;color:#fff;">End Date</div>
<div class="t" style="left:76.0px;width:0;display:flex;justify-content:center;top:416.7px;font-size:43px;font-weight:bold; color:#111;"><span style="white-space:pre;">#</span></div>

<!-- red highlights -->
<div style="left:27px;top:845.2px;width:3975px;height:4.2px;background:#ff0000;"></div>
<div style="left:27px;top:912.4px;width:3975px;height:4.4px;background:#ff0000;"></div>
<div style="left:27px;top:2287.6px;width:3974px;height:4.4px;background:#ff0000;"></div>
<div style="left:27px;top:2354.8px;width:3974px;height:4.4px;background:#ff0000;"></div>
<div style="left:3996.6px;top:2287.6px;width:4.4px;height:71.6px;background:#ff0000;"></div>

<!-- annotation -->
<div class="t" style="left:4112px;top:2236.8px;font-size:39.8px;font-weight:bold;color:#111;transform:scaleX(1.019);transform-origin:left center;">Spinnerets</div>
<div class="t" style="left:4104px;top:2294.2px;font-size:41.2px;font-weight:bold;color:#111;transform:scaleX(0.98);transform-origin:left center;">Changeover</div>

<svg width="4355" height="2479" viewBox="0 0 4355 2479">
 <!-- logo -->
 <g fill="#b8e0fc" transform="translate(28,28)">
  <path d="M34 12 C38 15 40.5 20 40.5 28 L40.5 42 C40.5 50 47 57 60 57.5 C54 64 46 68 38 68 C20 68 7.5 55 7.5 39 C7.5 24 17 12 30 11.5 C31.5 11.5 33 11.7 34 12 Z"/>
  <path d="M30 8 C38 6 47 6.5 54 9.5 C60 12 63 16 63 21 C63 26 59 30 54 30 C50.5 30 48.5 27.5 47 24.5 C44.5 19 41 13.5 33 9.5 C32 9 31 8.5 30 8 Z"/>
 </g>
 <!-- menu caret -->
 <path d="M542 60 L563 60 L552.5 73 Z" fill="#e8f3fd"/>
 <!-- search icon -->
 <g fill="none" stroke="#4a4a4a" stroke-width="4">
  <circle cx="1055.3" cy="62" r="13.3"/>
  <path d="M1065 72 L1080 87" stroke-linecap="round"/>
 </g>
 <!-- print icon -->
 <g fill="#bfe2fc">
  <rect x="1156" y="42" width="30" height="9"/>
  <path d="M1150 55.5 h42 a4 4 0 0 1 4 4 v18.5 h-10 v10.7 h-30 v-10.7 h-10 v-18.5 a4 4 0 0 1 4 -4 z"/>
 </g>
 <rect x="1162.5" y="72" width="17.5" height="13.5" fill="#005ec5"/>
 <circle cx="1189" cy="63.3" r="2.7" fill="#005ec5"/>
 <!-- refresh icon header -->
 <g fill="none" stroke="#c4e4fb" stroke-width="3.2">
  <path d="M1250 68 A21 21 0 1 1 1256 84"/>
 </g>
 <path d="M1239 65 L1257 65 L1248 76 Z" fill="#c4e4fb"/>
 <!-- tabs icons -->
 <path transform="translate(207,140.5) scale(2.25)" fill="#8f8f8f" d="M12 4V1L8 5l4 4V6c3.31 0 6 2.69 6 6 0 1.01-.25 1.970-.7 2.8l1.46 1.46C19.54 15.03 20 13.570 20 12c0-4.42-3.58-8-8-8zm0 14c-3.31 0-6-2.69-6-6 0-1.01.25-1.97.7-2.8L5.24 7.74C4.46 8.97 4 10.43 4 12c0 4.42 3.58 8 8 8v3l4-4-4-4v3z"/>
 <path d="M668 152 L698 182 M698 152 L668 182" fill="none" stroke="#8f8f8f" stroke-width="3.2"/>
 <g fill="none" stroke="#ffffff" stroke-width="3.4">
  <path d="M1154 154 L1182 182 M1182 154 L1154 182"/>
 </g>
 <!-- toolbar icons -->
 <g fill="none" stroke="#50565c" stroke-width="4.2">
  <path d="M120 348 H155.5 M138 329 V366"/>
  <path d="M219.5 340 V330 a3 3 0 0 1 3 -3 H257 a3 3 0 0 1 3 3 V365.5 a3 3 0 0 1 -3 3 H222.5 a3 3 0 0 1 -3 -3 V356"/>
  <path d="M218 348 H246 M236.5 336.5 L248 348 L236.5 359.5"/>
  <path d="M418.5 326.5 H458 L445 344 V369 L433 358 V344 Z" stroke-linejoin="round"/>
  <path d="M520.5 326.5 H560 L547 344 V369 L535 358 V344 Z" stroke-linejoin="round"/>
  <path d="M622.5 326.5 H662 L649 344 V369 L637 358 V344 Z" stroke-linejoin="round"/>
 </g>
 <path transform="translate(311.8,318.2) scale(2.44)" fill="#50565c" d="M17.65 6.35C16.2 4.9 14.21 4 12 4c-4.420 0-7.99 3.58-7.99 8s3.57 8 7.99 8c3.73 0 6.84-2.55 7.73-6h-2.08c-.82 2.33-3.04 4-5.65 4-3.31 0-6-2.69-6-6s2.69-6 6-6c1.66 0 3.14.69 4.22 1.78L13 11h7V4l-2.35 2.35z"/>
 <path d="M451 364 H471 M461 354 V374" stroke="#12a35a" stroke-width="5.5" fill="none"/>
 <path d="M553 363.5 L559.5 370 L574 355.5" stroke="#1b68da" stroke-width="4.5" fill="none"/>
 <path d="M657 356 L673 372 M673 356 L657 372" stroke="#e01010" stroke-width="5" fill="none"/>
 <!-- transfer icon -->
 <g fill="none" stroke="#50565c" stroke-width="4">
  <path d="M724 332 V363"/>
  <path d="M717 348 H756"/>
  <path d="M724 336 H750 a5 5 0 0 1 5 5 V353 a5 5 0 0 1 -5 5 H724"/>
  <path d="M744.5 336 V358"/>
 </g>
 <path d="M759 348 H771" stroke="#14a862" stroke-width="4.5"/>
 <path d="M768 338.5 L779.5 348 L768 357.5 Z" fill="#14a862"/>
 <g fill="#b9bdc1">
  <rect x="782" y="325" width="14.5" height="9.5"/>
  <rect x="813.5" y="343.5" width="11.5" height="9.5"/>
  <rect x="813.5" y="361.5" width="11.5" height="9.5"/>
 </g>
 <path d="M789 341 V366 H807 M789 348 H807" stroke="#b9bdc1" stroke-width="3.2" fill="none"/>
 <!-- excel -->
 <g fill="none" stroke="#50565c" stroke-width="4.5" stroke-linejoin="round">
  <path d="M873 331 L899 327 V369 L873 365 Z"/>
  <path d="M900 332 H919 V364 H900"/>
 </g>
 <path d="M880.5 339 L891.5 356 M891.5 339 L880.5 356" stroke="#50565c" stroke-width="2.6" fill="none"/>
 <g fill="#50565c">
  <rect x="899" y="340" width="21" height="4"/>
  <rect x="899" y="350.5" width="21" height="4"/>
  <rect x="907.5" y="331" width="4" height="34"/>
 </g>
 <!-- help -->
 <circle cx="998.2" cy="347.9" r="22.7" fill="none" stroke="#50565c" stroke-width="4.6"/>
 <path d="M990 340 A8.5 8.5 0 1 1 1002 347.5 C999 350 998 352 998 355" fill="none" stroke="#50565c" stroke-width="4.4"/>
 <circle cx="998" cy="361" r="2.7" fill="#50565c"/>
 <!-- header funnels -->
 <g fill="#ffffff"><path d="M141.9 411.3 h38 l-13.5 19 v18.5 q0 3.5 -3 3.5 q-2 0 -4 -2.5 l-4 -4.5 v-15 z"/><path d="M439.0 411.3 h38 l-13.5 19 v18.5 q0 3.5 -3 3.5 q-2 0 -4 -2.5 l-4 -4.5 v-15 z"/><path d="M808.5 411.3 h38 l-13.5 19 v18.5 q0 3.5 -3 3.5 q-2 0 -4 -2.5 l-4 -4.5 v-15 z"/><path d="M1190.5 411.3 h38 l-13.5 19 v18.5 q0 3.5 -3 3.5 q-2 0 -4 -2.5 l-4 -4.5 v-15 z"/><path d="M1638.7 411.3 h38 l-13.5 19 v18.5 q0 3.5 -3 3.5 q-2 0 -4 -2.5 l-4 -4.5 v-15 z"/><path d="M1928.0 411.3 h38 l-13.5 19 v18.5 q0 3.5 -3 3.5 q-2 0 -4 -2.5 l-4 -4.5 v-15 z"/><path d="M3233.0 414.0 h38 l-13.5 19 v18.5 q0 3.5 -3 3.5 q-2 0 -4 -2.5 l-4 -4.5 v-15 z"/><path d="M3624.0 414.0 h38 l-13.5 19 v18.5 q0 3.5 -3 3.5 q-2 0 -4 -2.5 l-4 -4.5 v-15 z"/></g>
 <!-- bracket -->
 <path d="M4001 2159 C4030 2159 4042 2162 4042 2172 V2283 C4042 2289 4050 2292 4081 2292.5 C4050 2293 4042 2296 4042 2302 V2413 C4042 2422 4030 2425 4001 2425" fill="none" stroke="#404040" stroke-width="2.6"/>
</svg>
</body></html>
